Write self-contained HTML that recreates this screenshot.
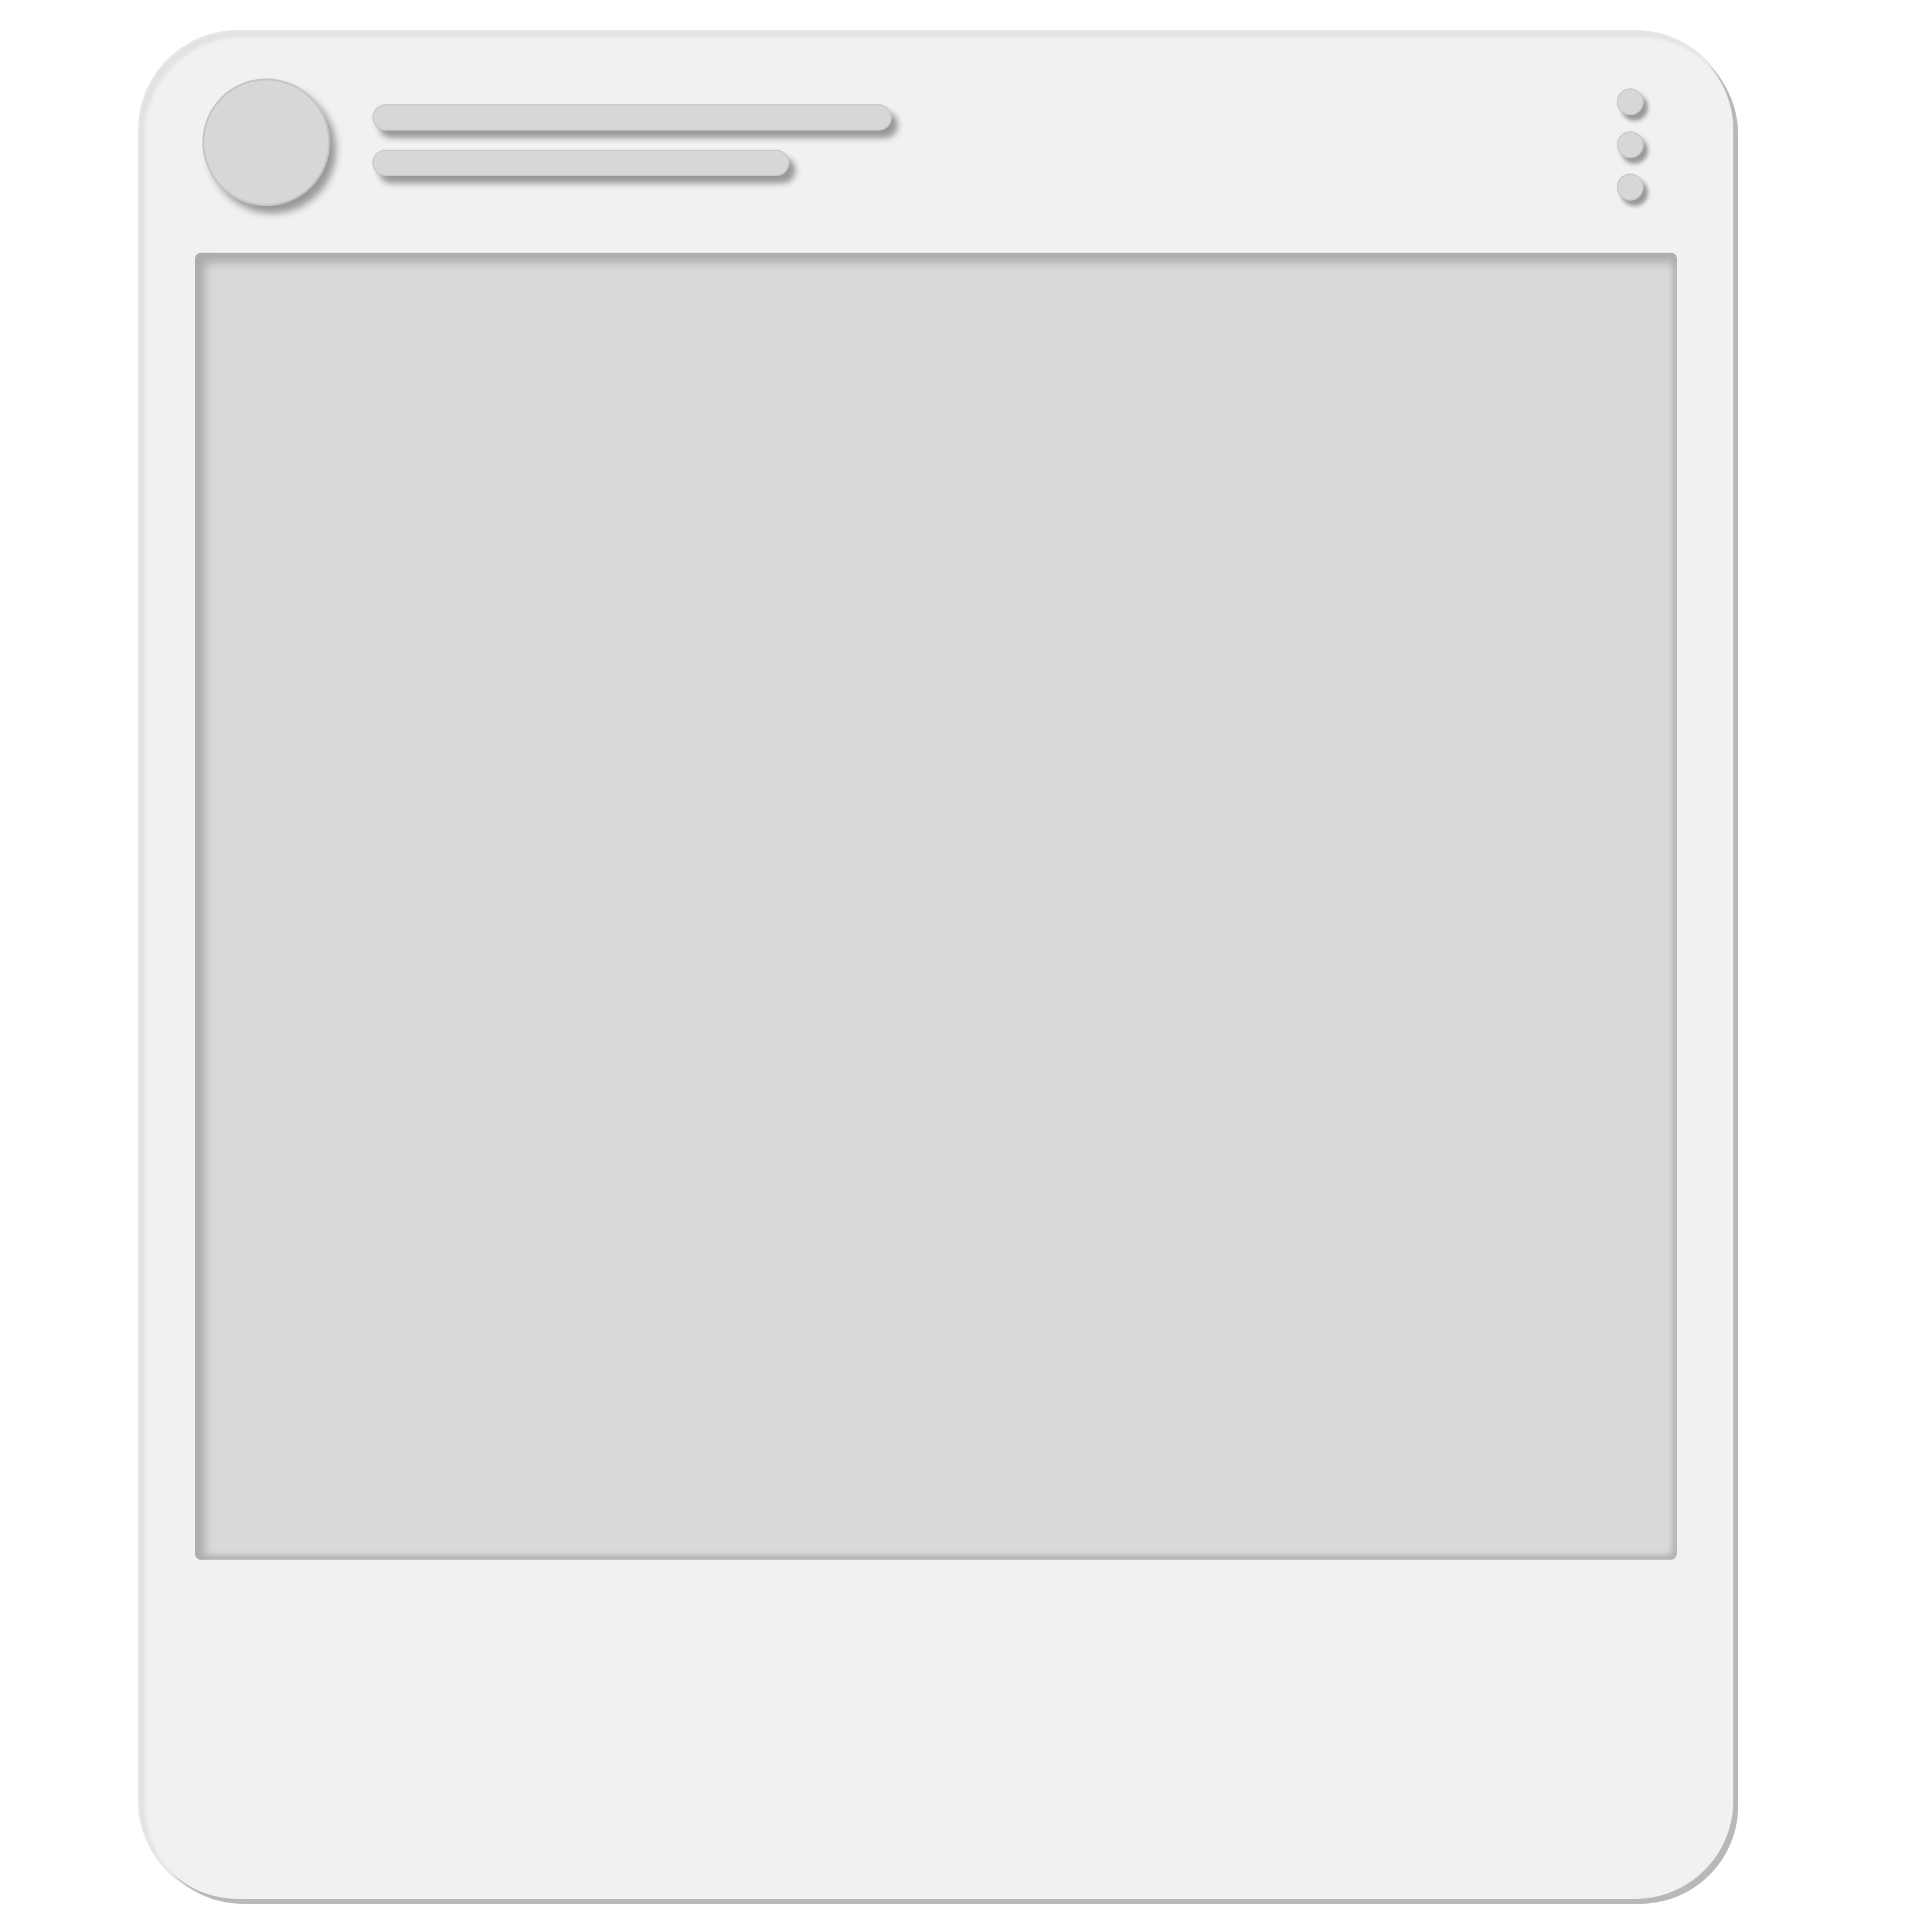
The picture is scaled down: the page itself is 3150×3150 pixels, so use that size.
<!DOCTYPE html>
<html><head><style>
html,body{margin:0;padding:0;width:3150px;height:3150px;background:#fff;overflow:hidden}
.card{position:absolute;left:228px;top:52px;width:2598px;height:3044px;background:#f1f1f1;border-radius:160px;box-sizing:border-box;box-shadow:8px 8px 0 #b8b8b8,0 0 0 3px #e6e6e6,inset 8px 8px 6px #e2e2e2}
.img{position:absolute;left:318px;top:412px;width:2416px;height:2131px;background:#d9d9d9;border-radius:10px;box-shadow:inset 16px 16px 16px #acacac,inset -8px -8px 8px #b6b6b6;}
.av{position:absolute;left:330px;top:128px;width:208px;height:208px;border-radius:50%;background:#d7d7d7;border:3px solid #c4c4c4;box-sizing:border-box;box-shadow:10px 12px 12px #999}
.bar{position:absolute;left:607px;height:43px;border-radius:22px;background:#d7d7d7;border:2px solid #c8c8c8;box-sizing:border-box;box-shadow:10px 12px 10px #999}
.dot{position:absolute;left:2636px;width:44px;height:44px;border-radius:50%;background:#d7d7d7;border:2px solid #c8c8c8;box-sizing:border-box;box-shadow:7px 9px 7px #999}
</style></head><body>
<div class="card"></div>
<div class="img"></div>
<div class="av"></div>
<div class="bar" style="top:170px;width:847px"></div>
<div class="bar" style="top:244px;width:680px"></div>
<div class="dot" style="top:144px"></div>
<div class="dot" style="top:214px"></div>
<div class="dot" style="top:283px"></div>
</body></html>
